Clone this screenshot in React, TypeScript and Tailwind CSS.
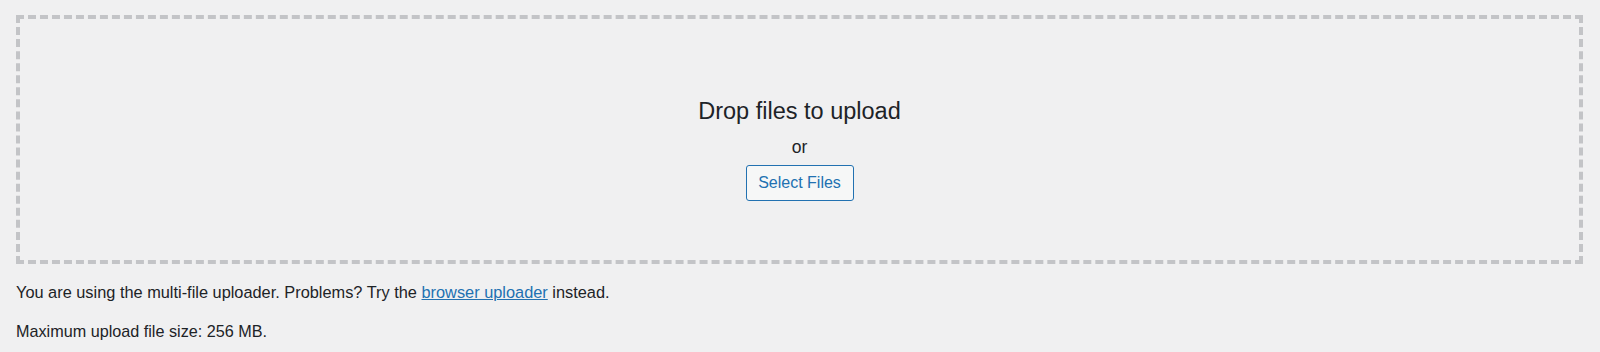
export default function App() {
  return (
    <div
      className="min-h-screen w-full bg-[#f0f0f1] pl-[16px] pr-[17px] pt-[15px] text-[#1d2327]"
      style={{ fontFamily: '"Liberation Sans", Arial, sans-serif' }}
    >
      <div className="flex h-[249px] flex-col items-center border-4 border-dashed border-[#c3c4c7] pt-[78px]">
        <p className="text-[23.5px] leading-[28px]">Drop files to upload</p>
        <p className="mt-[10.6px] text-[17.5px] leading-[22px]">or</p>
        <button
          type="button"
          className="mt-[7.4px] flex h-[36px] w-[108px] items-center justify-center rounded-[3px] border border-[#2271b1] bg-[#f6f7f7] text-[16px] leading-[20px] text-[#2271b1]"
        >
          Select Files
        </button>
      </div>
      <p className="mt-[18.4px] text-[16.35px] leading-[20px]">
        You are using the multi-file uploader. Problems? Try the{" "}
        <a href="#" className="text-[#2271b1] underline">
          browser uploader
        </a>{" "}
        instead.
      </p>
      <p className="mt-[18.8px] text-[16.2px] leading-[20px]">Maximum upload file size: 256 MB.</p>
    </div>
  );
}
